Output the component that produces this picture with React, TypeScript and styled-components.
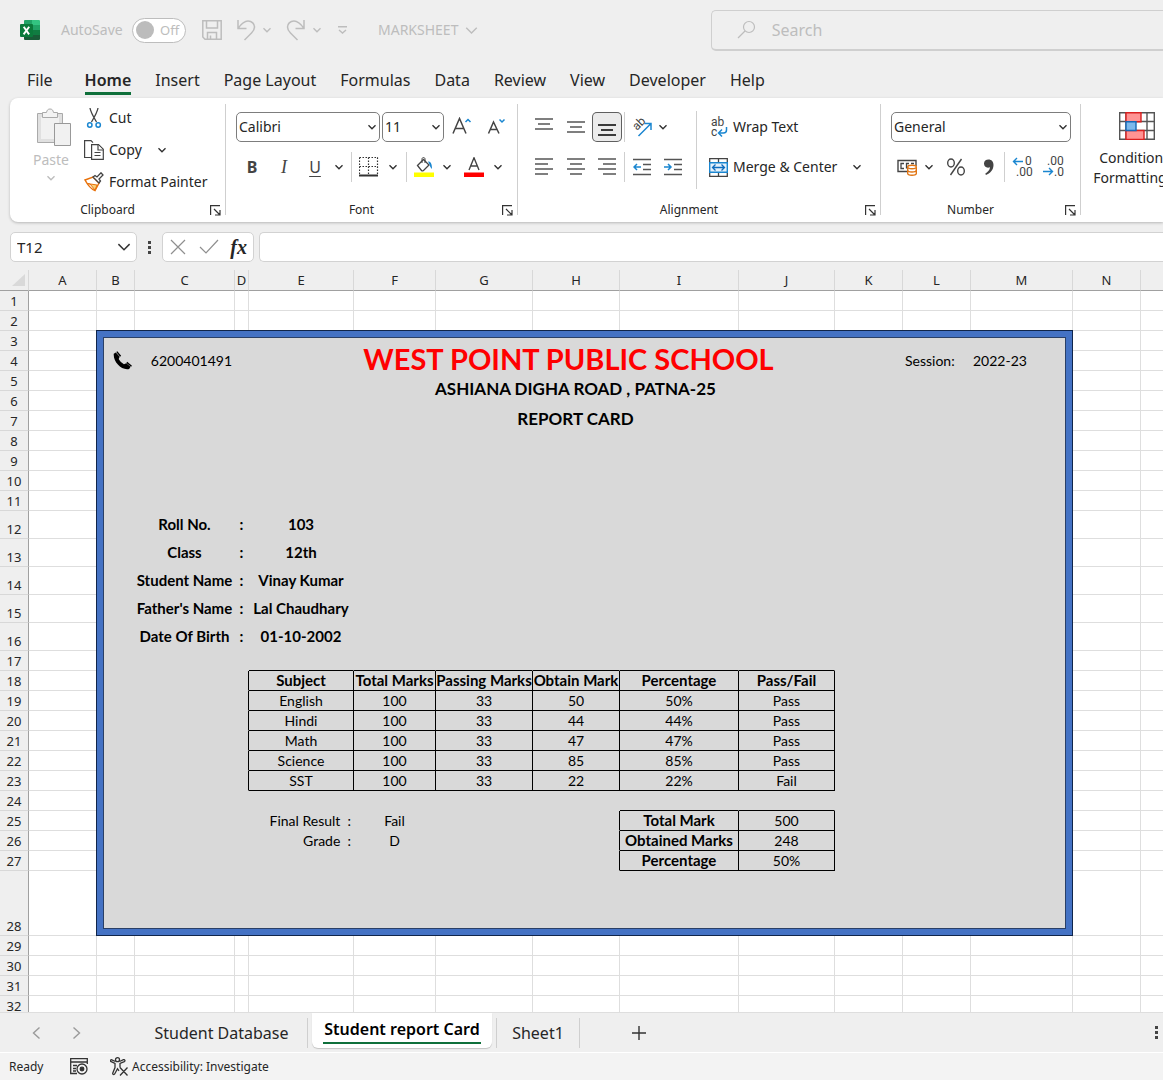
import React from "react";
import styled, { createGlobalStyle } from "styled-components";

const UI = `"Noto Sans", "Open Sans", sans-serif`;
const CELL = `Lato, "Open Sans", sans-serif`;

const ink = "#262626";
const faded = "#bdbdbd";
const rule = "#dedede";
const green = "#0f703b";
const blue = "#1a86d0";

const Global = createGlobalStyle`
  * { box-sizing: border-box; }
  body { margin: 0; background: #efefef; overflow: hidden; }
  button, input, select { font: inherit; color: inherit; }
  button { border: 0; background: none; padding: 0; cursor: pointer; }
  svg { display: block; flex: none; }
`;

const Window = styled.div`
  display: flex;
  flex-direction: column;
  height: 100vh;
  overflow: hidden;
  background: #efefef;
  color: ${ink};
  font: 14px/20px ${UI};
`;

/* ---------- title bar ---------- */

const TitleBar = styled.header`
  display: grid;
  grid-template-columns: 11fr 7fr;
  align-items: center;
  height: 60px;
  color: ${faded};
  flex: none;
`;
const QuickAccess = styled.div`
  display: flex;
  align-items: center;
  gap: 14px;
  padding-left: 20px;
`;
const AutoSave = styled.label`
  display: flex;
  align-items: center;
  justify-content: space-between;
  width: 125px;
  margin: 0 2px 0 7px;
`;
const Toggle = styled.span`
  display: flex;
  align-items: center;
  gap: 6px;
  width: 54px;
  height: 25px;
  padding-left: 3px;
  border: 1px solid ${faded};
  border-radius: 13px;
  background: #fff;
  font-size: 13px;
`;
const ToggleBox = styled.input`
  appearance: none;
  width: 18px;
  height: 18px;
  margin: 0;
  border-radius: 50%;
  background: #bcbcbc;
`;
const QuickButton = styled.button`
  display: flex;
  align-items: center;
  gap: 6px;
`;
const FileName = styled(QuickButton)`
  margin-left: 16px;
`;
const Search = styled.label`
  display: flex;
  align-items: center;
  gap: 14px;
  height: 41px;
  padding-left: 25px;
  border: 1px solid #cfcfcf;
  border-right: 0;
  border-bottom-width: 2px;
  border-radius: 5px 0 0 5px;
`;
const SearchInput = styled.input`
  flex: 1;
  min-width: 0;
  border: 0;
  background: none;
  font-size: 16px;
  &::placeholder { color: ${faded}; opacity: 1; }
`;

/* ---------- ribbon tabs ---------- */

const Tabs = styled.nav`
  display: flex;
  gap: 24px;
  height: 38px;
  padding: 8px 0 3px 27px;
  flex: none;
`;
const Tab = styled.button<{ $on?: boolean; $file?: boolean }>`
  font-size: 16px;
  line-height: 24px;
  white-space: nowrap;
  margin-right: ${(p) => (p.$file ? 8 : 0)}px;
  font-weight: ${(p) => (p.$on ? 600 : 400)};
  border-bottom: 3px solid ${(p) => (p.$on ? green : "transparent")};
`;

/* ---------- ribbon ---------- */

const Ribbon = styled.section`
  display: flex;
  flex: none;
  height: 124px;
  margin-left: 10px;
  padding: 6px 0 7px;
  border-radius: 8px 0 0 8px;
  background: #fff;
  box-shadow: 0 1px 3px #0000003d;
  overflow: hidden;
`;
const Group = styled.div<{ $w: number }>`
  display: flex;
  flex-direction: column;
  flex: none;
  width: ${(p) => p.$w}px;
  border-right: 1px solid #cfcfcf;
`;
const GroupBody = styled.div`
  display: flex;
  flex: 1;
`;
const GroupFoot = styled.div`
  display: flex;
  align-items: center;
  height: 16px;
  margin-bottom: -3px;
  font-size: 12px;
`;
const GroupName = styled.span`
  flex: 1;
  text-align: center;
`;
const Launcher = styled.button`
  width: 20px;
  display: grid;
  place-items: center;
`;
const Stack = styled.div<{ $w?: number; $pad?: number }>`
  display: flex;
  flex-direction: column;
  width: ${(p) => (p.$w ? p.$w + "px" : "auto")};
  padding: 3px 0 0 ${(p) => p.$pad ?? 10}px;
`;
const Row = styled.div<{ $gap?: number }>`
  display: flex;
  align-items: center;
  height: 40px;
  gap: ${(p) => p.$gap ?? 0}px;
`;
const Tool = styled.button<{ $w: number; $on?: boolean }>`
  display: grid;
  place-items: center;
  flex: none;
  width: ${(p) => p.$w}px;
  height: 30px;
  border-radius: 5px;
  background: ${(p) => (p.$on ? "#ebebeb" : "none")};
  box-shadow: ${(p) => (p.$on ? "inset 0 0 0 1px #5f5f5f" : "none")};
`;
const Glyph = styled.span<{ $style: "bold" | "italic" | "underline" }>`
  font-size: ${(p) => (p.$style === "italic" ? 18 : 16)}px;
  line-height: 20px;
  color: #444;
  font-weight: ${(p) => (p.$style === "bold" ? 700 : 400)};
  font-style: ${(p) => (p.$style === "italic" ? "italic" : "normal")};
  font-family: ${(p) => (p.$style === "italic" ? `"Liberation Serif", serif` : UI)};
  text-decoration: ${(p) => (p.$style === "underline" ? "underline" : "none")};
  text-underline-offset: 3px;
`;
const Sep = styled.span<{ $m?: number }>`
  flex: none;
  width: 1px;
  height: 30px;
  margin: 0 ${(p) => p.$m ?? 3}px;
  background: #cfcfcf;
`;
const TallSep = styled.span`
  width: 1px;
  height: 78px;
  margin-top: 7px;
  background: #cfcfcf;
`;
const Picker = styled.span<{ $w: number }>`
  display: grid;
  align-items: center;
  flex: none;
  width: ${(p) => p.$w}px;
  height: 30px;
  border: 1px solid #7d7d7d;
  border-radius: 5px;
  background: #fff;
  & > * { grid-area: 1 / 1; }
  & > svg { justify-self: end; margin-right: 2px; pointer-events: none; }
`;
const Select = styled.select`
  appearance: none;
  width: 100%;
  height: 28px;
  padding: 0 16px 0 2px;
  border: 0;
  background: none;
`;
const Paste = styled.button`
  display: flex;
  flex-direction: column;
  align-items: center;
  gap: 4px;
  width: 42px;
  margin: 4px 12px 0 20px;
  color: ${faded};
`;
const Commands = styled.div`
  display: flex;
  flex-direction: column;
  margin-top: -2px;
`;
const Command = styled.button<{ $h?: number }>`
  display: flex;
  align-items: center;
  gap: 5px;
  height: ${(p) => p.$h ?? 32}px;
  white-space: nowrap;
  & > svg:last-child:not(:first-child) { margin-left: 10px; }
`;
const BigCommand = styled.button`
  display: flex;
  flex-direction: column;
  align-items: center;
  flex: none;
  gap: 8px;
  width: 96px;
  margin: 8px 0 0 8px;
  align-self: flex-start;
`;
const WithChevron = styled.span`
  display: flex;
  align-items: center;
  gap: 4px;
`;

/* ---------- formula bar ---------- */

const FormulaBar = styled.div`
  display: flex;
  align-items: center;
  flex: none;
  height: 30px;
  margin: 10px 0 8px 10px;
`;
const NameBox = styled.div`
  display: flex;
  align-items: center;
  width: 127px;
  height: 30px;
  padding: 0 4px 0 6px;
  border: 1px solid #d2d2d2;
  border-radius: 5px;
  background: #fff;
`;
const NameInput = styled.input`
  flex: 1;
  min-width: 0;
  border: 0;
  padding: 0;
  font-size: 15px;
`;
const Dots = styled.button<{ $w: number; $end?: boolean }>`
  display: grid;
  place-items: center;
  width: ${(p) => p.$w}px;
  margin-left: ${(p) => (p.$end ? "auto" : 0)};
`;
const FormulaButtons = styled.div`
  display: flex;
  align-items: center;
  justify-content: space-between;
  width: 92px;
  height: 30px;
  padding: 0 6px;
  margin-right: 5px;
  border: 1px solid #d2d2d2;
  border-radius: 5px;
  background: #fff;
`;
const Fx = styled.button`
  font: italic 700 20px/24px "Liberation Serif", serif;
`;
const FormulaInput = styled.input`
  flex: 1;
  height: 30px;
  border: 1px solid #d2d2d2;
  border-right: 0;
  border-radius: 5px 0 0 5px;
  background: #fff;
`;

/* ---------- sheet ---------- */

const Sheet = styled.main`
  position: relative;
  flex: 1;
  min-height: 0;
  overflow: hidden;
  background: #fff;
`;
const Grid = styled.table`
  table-layout: fixed;
  border-collapse: separate;
  border-spacing: 0;
  background: #fff;
`;
const ColHead = styled.th`
  height: 21px;
  padding: 0;
  background: #efefef;
  border-right: 1px solid #d8d8d8;
  border-bottom: 1px solid #a0a0a0;
  font: 13px/19px ${UI};
`;
const Corner = styled(ColHead)`
  & > svg { margin: 0 0 0 12px; }
`;
const RowHead = styled.th`
  padding: 0;
  background: #efefef;
  border-right: 1px solid #a0a0a0;
  border-bottom: 1px solid #d8d8d8;
  font: 13px/17px ${UI};
  vertical-align: bottom;
`;
const Cell = styled.td<{ $fill?: boolean; $r?: boolean; $b?: boolean; $bold?: boolean; $align?: string }>`
  padding: ${(p) => (p.$align ? "0 2px" : "0")};
  overflow: hidden;
  white-space: pre;
  color: #000;
  font: ${(p) => (p.$bold ? "700 15px" : "400 14px")}/19px ${CELL};
  text-align: ${(p) => p.$align ?? "center"};
  vertical-align: middle;
  background: ${(p) => (p.$fill ? "#d9d9d9" : "#fff")};
  border-right: 1px solid ${(p) => (p.$r ? "#000" : p.$fill ? "#d9d9d9" : rule)};
  border-bottom: 1px solid ${(p) => (p.$b ? "#000" : p.$fill ? "#d9d9d9" : rule)};
  & > svg { margin-left: auto; }
`;
const Heading = styled(Cell)`
  vertical-align: top;
  padding-top: 13px;
`;
const School = styled.h1`
  margin: 0;
  color: #f00;
  font-size: 29px;
  line-height: 30px;
`;
const SubHead = styled.h2`
  margin: 0;
  padding-left: 14px;
  font-size: 17px;
  line-height: 30px;
`;
const Frame = styled.div`
  position: absolute;
  border: 6px solid #4472c4;
  box-shadow: 0 0 0 1px #10254a, inset 0 0 0 1px #2a4067;
  pointer-events: none;
`;

/* ---------- bottom bars ---------- */

const SheetTabs = styled.nav`
  display: flex;
  align-items: center;
  flex: none;
  height: 41px;
  border-top: 1px solid ${rule};
  border-bottom: 1px solid #fff;
  font-size: 16px;
`;
const Navs = styled.div`
  display: flex;
  width: 136px;
  padding-left: 16px;
`;
const Nav = styled.button<{ $w?: number }>`
  display: grid;
  place-items: center;
  width: ${(p) => p.$w ?? 40}px;
`;
const SheetTab = styled.button<{ $w: number }>`
  width: ${(p) => p.$w}px;
  white-space: nowrap;
`;
const ActiveTab = styled.button`
  display: flex;
  justify-content: center;
  align-items: flex-start;
  align-self: flex-start;
  width: 180px;
  height: 35px;
  margin: 0 4px;
  padding-top: 4px;
  border-radius: 0 0 6px 6px;
  background: #fff;
  color: #000;
  font-weight: 600;
  white-space: nowrap;
  box-shadow: 0 1px 1px #0000002e;
`;
const ActiveText = styled.span`
  line-height: 24px;
  padding: 0 1px 1px;
  border-bottom: 2px solid ${green};
`;
const StatusBar = styled.footer`
  display: flex;
  align-items: center;
  flex: none;
  height: 27px;
  padding-left: 9px;
  background: #f3f3f3;
  font-size: 12px;
`;
const StatusButton = styled.button`
  display: flex;
  align-items: center;
  gap: 4px;
  margin-left: 22px;
`;
const Ready = styled.span`
  width: 39px;
`;

/* ---------- icons ---------- */

const Chevron = ({ c = "#333", s = 8 }: { c?: string; s?: number }) => (
  <svg width={s + 2} height={s} viewBox="0 0 10 8" fill="none" stroke={c} strokeWidth={s > 8 ? 0.9 : 1.4}>
    <path d="M1.5 2.2 5 5.7l3.5-3.5" />
  </svg>
);
const Excel = () => (
  <svg width="20" height="20" viewBox="0 0 20 20">
    <path d="M5 0h7v5H4V1a1 1 0 0 1 1-1z" fill="#21a366" />
    <path d="M12 0h7a1 1 0 0 1 1 1v4h-8z" fill="#33c481" />
    <path d="M4 5h8v5H4z" fill="#107c41" />
    <path d="M12 5h8v5h-8z" fill="#21a366" />
    <path d="M4 10h8v5H4z" fill="#185c37" />
    <path d="M12 10h8v5h-8z" fill="#107c41" />
    <path d="M4 15h16v4a1 1 0 0 1-1 1H5a1 1 0 0 1-1-1z" fill="#185c37" />
    <rect y="4" width="13" height="13" rx="1" fill="#0b7a3b" />
    <path d="m3.7 6.800 5.400 7.600M9.200 6.800l-5.600 7.600" stroke="#fff" strokeWidth="1.900" />
  </svg>
);
const Save = () => (
  <svg width="20" height="20" viewBox="0 0 20 20" fill="none" stroke={faded} strokeWidth="1.5">
    <path d="M.8.8h18.4v18.4H3L.8 17zM4.5 1v7h11V1M5.500 19v-6.500h9V19M8.500 15.500V19" />
  </svg>
);
const Undo = ({ flip }: { flip?: boolean }) => (
  <svg width="20" height="22" viewBox="0 0 20 22" fill="none" stroke={faded} strokeWidth="1.5">
    <g transform={flip ? "matrix(-1 0 0 1 20 0)" : undefined}>
      <path d="M2 1v8.500h8.500M2.200 9.200C5.500 4.500 8.500 2 12 2c4 0 6.500 3 6.500 6 0 2.500-1 4-3 6L8.500 21" />
    </g>
  </svg>
);
const Customize = () => (
  <svg width="12" height="10" viewBox="0 0 12 10" fill="none" stroke={faded} strokeWidth="1.400">
    <path d="M2 1.700h9M3 5l3.500 3L10 5" />
  </svg>
);
const Magnifier = () => (
  <svg width="19" height="19" viewBox="0 0 19 19" fill="none" stroke={faded} strokeWidth="1.200">
    <circle cx="12" cy="7" r="5.500" />
    <path d="m8 11-7 7" />
  </svg>
);
const PasteIcon = () => (
  <svg width="42" height="38" viewBox="-6 0 42 38">
    <path d="M1.500 5.500h25v29h-25z" fill="#e0e0e0" stroke="#aaa" />
    <path d="M5 9h18v22H5z" fill="#f1f1f1" />
    <path d="M6.500 9.500v-5h4C11 2 12 1 14 1s3 1 3.500 3.500h4v5z" fill="#f3f3f3" stroke="#aaa" />
    <path d="M18.500 15.500h16v22h-16z" fill="#f1f1f1" stroke="#999" />
  </svg>
);
const CutIcon = () => (
  <svg width="20" height="20" viewBox="0 0 20 20" fill="none">
    <path d="M6 0c.5 4 3.500 9 6.500 14M14 0c-.5 4-3.500 9-6.500 14" stroke="#444" strokeWidth="1.300" />
    <circle cx="5.800" cy="17" r="2.200" stroke={blue} strokeWidth="1.500" />
    <circle cx="14.200" cy="17" r="2.200" stroke={blue} strokeWidth="1.500" />
  </svg>
);
const CopyIcon = () => (
  <svg width="20" height="20" viewBox="0 0 20 20" fill="#fff" stroke="#444" strokeWidth="1.200">
    <path d="M7 17.500H.600V.600H7l2 2" />
    <path d="M7.600 4.600h6.900l4.800 4.700v10H7.600z" />
    <path d="M14 5v5h5M10.500 12.500h6M10.500 15.500h6" />
  </svg>
);
const Painter = () => (
  <svg width="20" height="20" viewBox="0 0 20 20" fill="none">
    <path d="m1 8 8-3 6 6-4 7.500c-3-1-7-5-10-10.500z" fill="#fff" stroke="#e8720c" strokeWidth="1.500" />
    <path d="m3 11.500 3 .5 5 6 2-5z" fill="#f9d27a" stroke="#e8720c" />
    <path d="m9 5 6 6 1.500-2-1.500-2 4-4-2-2.200L13 5l-2-1.500z" fill="#fff" stroke="#444" strokeWidth="1.300" />
  </svg>
);
const LaunchIcon = () => (
  <svg width="11" height="11" viewBox="0 0 11 11" fill="none" stroke="#333" strokeWidth="1.200">
    <path d="M.600 10V.600H10M4 4l5.500 5.500M10 5v5H5" />
  </svg>
);
const Sizer = ({ up }: { up?: boolean }) => (
  <svg width="22" height="20" viewBox="0 0 22 20" fill="none" strokeWidth="1.500">
    <path d={up ? "M2 16.500 8.500 1.500 15 16.500M4.200 11.500h8.600" : "M3.500 16.500 8.500 5 14 16.500M5.200 12.500h7"} stroke="#444" />
    <path d={up ? "m14.500 5 2.500-2.500L19.500 5" : "M14.500 2.500 17 5l2.500-2.500"} stroke={blue} />
  </svg>
);
const BordersIcon = () => (
  <svg width="20" height="20" viewBox="0 0 20 20" fill="none" stroke="#333">
    <path d="M.500.500h18.500M.500 9.500h18.500M.500.500v17M9.500.500v17M18.500.500v17" strokeDasharray="1.500 1.500" strokeWidth="1.200" />
    <path d="M0 18.500h19" strokeWidth="2" />
  </svg>
);
const FillIcon = () => (
  <svg width="20" height="20" viewBox="0 0 20 20" fill="none">
    <path d="M0 15.500h20V20H0z" fill="#ff0" />
    <path d="m3.500 8.500 6-6 5.500 5.500-5.500 5.500c-1 .7-1.500.5-2 0z" stroke="#444" strokeWidth="1.300" />
    <path d="M8 6V2c0-2 3-2 3 0v4" stroke="#444" />
    <path d="M14 4.500c3 0 4 2.500 4 7.500-1.500-1-2-3-2.500-4.500z" fill={blue} />
  </svg>
);
const FontColorIcon = () => (
  <svg width="20" height="20" viewBox="0 0 20 20" fill="none">
    <path d="M0 15.500h20V20H0z" fill="#f00" />
    <path d="M5 13 10 .800 15 13M6.700 9h6.600" stroke="#444" strokeWidth="1.400" />
  </svg>
);
const Lines = ({ rows, c = "#555" }: { rows: [number, number, number][]; c?: string }) => (
  <svg width="18" height="18" viewBox="0 0 18 18" stroke={c} strokeWidth="1.400">
    {rows.map(([x1, x2, y], i) => (
      <path key={i} d={`M${x1} ${y}H${x2}`} />
    ))}
  </svg>
);
const IndentIcon = ({ right }: { right?: boolean }) => (
  <svg width="18" height="18" viewBox="0 0 18 18" fill="none" strokeWidth="1.500">
    <path d="M0 1.500h18M10 6.500h8M10 11.500h8M0 16.500h18" stroke="#555" />
    <path d={right ? "M0 9h7M4 6l3 3-3 3" : "M8 9H1M4 6 1 9l3 3"} stroke={blue} />
  </svg>
);
const Tiny = styled.text`
  font-family: Roboto, sans-serif;
  font-size: 12px;
  fill: #444;
`;
const OrientIcon = () => (
  <svg width="24" height="24" viewBox="0 0 24 24" fill="none">
    <Tiny transform="translate(7 16) rotate(-45)">ab</Tiny>
    <path d="m8.500 21 12-12M14.500 8.500H21V15" stroke={blue} strokeWidth="1.500" />
  </svg>
);
const WrapIcon = () => (
  <svg width="19" height="26" viewBox="0 0 19 26" fill="none">
    <Tiny x="2" y="12">ab</Tiny>
    <Tiny x="2" y="22">c</Tiny>
    <path d="M17.500 13v3c0 2-1 3-3 3H10M13 15.500 9.500 19l3.500 3.500" stroke={blue} strokeWidth="1.500" />
  </svg>
);
const MergeIcon = () => (
  <svg width="19" height="19" viewBox="0 0 19 19" fill="none">
    <path d="M.700.700h17.600v17.600H.700zM9.500 1v4M9.500 14v4" stroke="#444" strokeWidth="1.300" />
    <path d="M.700 4.700h17.600v9.600H.700z" fill="#e5f1fb" stroke={blue} strokeWidth="1.400" />
    <path d="M3.500 9.500h12M6.500 6.500l-3 3 3 3M12.500 6.500l3 3-3 3" stroke="#0f6cbd" strokeWidth="1.300" />
  </svg>
);
const MoneyIcon = () => (
  <svg width="20" height="18" viewBox="0 0 20 18" fill="none">
    <path d="M19 8V2.500H1v11h9" stroke="#444" strokeWidth="1.400" />
    <path d="M7 5.500H4v5h3M12 5.500H9.500v5M14 5.500h3" stroke="#444" strokeWidth="1.300" />
    <path d="M10.700 9v6.500c0 2.300 8.600 2.300 8.600 0V9" fill="#fff" stroke="#e07514" strokeWidth="1.400" />
    <ellipse cx="15" cy="9" rx="4.300" ry="1.700" fill="#fff" stroke="#e07514" strokeWidth="1.400" />
    <path d="M10.700 12.300c0 2.300 8.600 2.300 8.600 0" stroke="#e07514" strokeWidth="1.400" />
  </svg>
);
const PercentIcon = () => (
  <svg width="20" height="18" viewBox="0 0 20 18" fill="none" stroke="#444" strokeWidth="1.400">
    <ellipse cx="5" cy="5" rx="3.300" ry="4" />
    <ellipse cx="15" cy="13" rx="3.300" ry="4" />
    <path d="M15.500 1 4.500 17" />
  </svg>
);
const CommaIcon = () => (
  <svg width="12" height="18" viewBox="0 0 12 18" fill="#444">
    <path d="M1 5.500C1 3 3 1.500 5.500 1.500c3 0 5 2.200 5 5.500 0 5-3.500 8.500-7.500 10l-.8-1.300C5 14 6.800 12 7 9.300 3.500 10.500 1 8.500 1 5.500z" />
  </svg>
);
const DecimalIcon = ({ less }: { less?: boolean }) => (
  <svg width="22" height="28" viewBox="0 0 22 28" fill="none">
    <Tiny x={less ? 4 : 13} y="12">{less ? ".00" : "0"}</Tiny>
    <Tiny x={less ? 11 : 4} y="23">{less ? ".0" : ".00"}</Tiny>
    <path d={less ? "M0 18.500h9M6 15l3.500 3.500L6 22" : "M11 8.500H1.500M5 5 1.500 8.500 5 12"} stroke={blue} strokeWidth="1.400" />
  </svg>
);
const ConditionalIcon = () => (
  <svg width="36" height="28" viewBox="0 0 36 28" fill="#fff" stroke="#555" strokeWidth="1.400">
    <path d="M.700.700h34.600v26.600H.700zM.700 9.500h34.600M.700 18.500h34.600M7 1v26M28 1v26" />
    <path d="M7 .700h15v9H7zM7 18.500h18v9H7z" fill="#ff9393" stroke="#d92020" />
    <path d="M7 9.700h10v8.800H7z" fill="#7db9ec" stroke="#1667b5" />
  </svg>
);
const DotsIcon = () => (
  <svg width="3" height="13" viewBox="0 0 3 13" fill="#444">
    <path d="M0 0h3v3H0zM0 5h3v3H0zM0 10h3v3H0z" />
  </svg>
);
const CrossIcon = () => (
  <svg width="18" height="18" viewBox="0 0 18 18" stroke="#8f8f8f" strokeWidth="1.200">
    <path d="m2 2 14 14M16 2 2 16" />
  </svg>
);
const TickIcon = () => (
  <svg width="20" height="18" viewBox="0 0 20 18" fill="none" stroke="#8f8f8f" strokeWidth="1.200">
    <path d="m1 9 6 6L19 2" />
  </svg>
);
const PhoneIcon = () => (
  <svg width="19" height="19" viewBox="0 0 20 20">
    <path d="M.800 3 3 1.500l4 4.500-1 2.500c1.300 2.300 3 4 5.500 5.500l2.500-1 4.500 3.500-1.500 2.500C9 21 0 11.500.800 3z" fill="#000" />
    <path d="m4 .700 4 4.800M14.500 12l5 4" stroke="#000" strokeWidth="1.500" />
  </svg>
);
const NavIcon = ({ next }: { next?: boolean }) => (
  <svg width="9" height="14" viewBox="0 0 9 14" fill="none" stroke="#9a9a9a" strokeWidth="1.400">
    <path d={next ? "m1.500 1.500 6 5.500-6 5.500" : "m7.500 1.500-6 5.500 6 5.500"} />
  </svg>
);
const PlusIcon = () => (
  <svg width="16" height="16" viewBox="0 0 16 16" stroke="#333" strokeWidth="1.400">
    <path d="M8 1v14M1 8h14" />
  </svg>
);
const MacroIcon = () => (
  <svg width="18" height="17" viewBox="0 0 18 17" fill="none" stroke="#333" strokeWidth="1.300">
    <path d="M7 15.500H.700V.700h16.600V6M1 4h16M3 7.500h4M3 10.500h3M3 13h3" />
    <circle cx="12" cy="11" r="5" fill="#f3f3f3" />
    <circle cx="12" cy="11" r="1.800" fill="#333" />
  </svg>
);
const AccessIcon = () => (
  <svg width="18" height="19" viewBox="0 0 18 19" fill="none" stroke="#333" strokeWidth="1.300">
    <circle cx="7.500" cy="2.700" r="2" />
    <path d="M5.500 4.500 1.800 2.800C.500 2.300 0 4 1.200 4.700L5 6.500v4L2.800 16c-.5 1.500 1.300 2.200 2 .8l2.700-5 1.500 2M9.500 4.500l4-1.800c1.300-.5 2 1.200.8 1.900L10 6.500v4M10 10.500l7.500 8M17.500 10.500l-7.500 8" />
  </svg>
);

/* ---------- sheet data ---------- */

const HEAD_W = 29;
const HEAD_H = 21;
const columns: [string, number][] = [
  ["A", 68], ["B", 38], ["C", 100], ["D", 14], ["E", 105], ["F", 82], ["G", 97], ["H", 87],
  ["I", 119], ["J", 96], ["K", 68], ["L", 68], ["M", 102], ["N", 68], ["O", 68],
];
const tableWidth = columns.reduce((s, c) => s + c[1], HEAD_W);
const rowHeight = (r: number) => (r >= 12 && r <= 16 ? 28 : r === 28 ? 65 : 20);
const rows = Array.from({ length: 32 }, (_, i) => i + 1);

type Entry = { text: React.ReactNode; bold?: boolean; align?: string };
const cells: Record<string, Entry> = {
  B4: { text: <PhoneIcon />, align: "right" },
  C4: { text: "6200401491", align: "right" },
  L4: { text: "Session:", align: "left" },
  M4: { text: "2022-23", align: "left" },
  E25: { text: "Final Result  :", align: "right" },
  F25: { text: "Fail" },
  E26: { text: "Grade  :", align: "right" },
  F26: { text: "D" },
};
[
  ["Roll No.", "103"],
  ["Class", "12th"],
  ["Student Name", "Vinay Kumar"],
  ["Father's Name", "Lal Chaudhary"],
  ["Date Of Birth", "01-10-2002"],
].forEach(([label, value], i) => {
  cells[`C${12 + i}`] = { text: label, bold: true };
  cells[`D${12 + i}`] = { text: ":", bold: true };
  cells[`E${12 + i}`] = { text: value, bold: true };
});
[
  ["Subject", "Total Marks", "Passing Marks", "Obtain Mark", "Percentage", "Pass/Fail"],
  ["English", "100", "33", "50", "50%", "Pass"],
  ["Hindi", "100", "33", "44", "44%", "Pass"],
  ["Math", "100", "33", "47", "47%", "Pass"],
  ["Science", "100", "33", "85", "85%", "Pass"],
  ["SST", "100", "33", "22", "22%", "Fail"],
].forEach((line, i) =>
  line.forEach((text, j) => {
    cells[`${"EFGHIJ"[j]}${18 + i}`] = { text, bold: i === 0 };
  })
);
[["Total Mark", "500"], ["Obtained Marks", "248"], ["Percentage", "50%"]].forEach(([k, v], i) => {
  cells[`I${25 + i}`] = { text: k, bold: true };
  cells[`J${25 + i}`] = { text: v };
});

// Boxed ranges: a cell draws its right and bottom edges, its neighbours supply the others.
const boxes = [
  { c0: 4, c1: 9, r0: 18, r1: 23 },
  { c0: 8, c1: 9, r0: 25, r1: 27 },
];
const card = { c0: 1, c1: 12, r0: 3, r1: 28 };
const heading = { c0: 3, c1: 10, r0: 3, r1: 8 };
const sumCols = (a: number, b: number) => columns.slice(a, b).reduce((s, c) => s + c[1], 0);
const sumRows = (a: number, b: number) => rows.slice(a, b).reduce((s, r) => s + rowHeight(r), 0);

const SheetCell = ({ c, r }: { c: number; r: number }) => {
  const h = heading;
  if (c === h.c0 && r === h.r0) {
    return (
      <Heading $fill $bold colSpan={h.c1 - h.c0 + 1} rowSpan={h.r1 - h.r0 + 1}>
        <School>WEST POINT PUBLIC SCHOOL</School>
        <SubHead>ASHIANA DIGHA ROAD , PATNA-25</SubHead>
        <SubHead>REPORT CARD</SubHead>
      </Heading>
    );
  }
  if (c >= h.c0 && c <= h.c1 && r >= h.r0 && r <= h.r1) return null;
  const fill = c >= card.c0 && c <= card.c1 && r >= card.r0 && r <= card.r1;
  const right = boxes.some((b) => r >= b.r0 && r <= b.r1 && c >= b.c0 - 1 && c <= b.c1);
  const bottom = boxes.some((b) => r >= b.r0 - 1 && r <= b.r1 && c >= b.c0 && c <= b.c1);
  const entry = cells[columns[c][0] + r];
  return (
    <Cell $fill={fill} $r={right} $b={bottom} $bold={entry?.bold} $align={entry?.align}>
      {entry?.text}
    </Cell>
  );
};

const Foot = ({ name }: { name: string }) => (
  <GroupFoot>
    <GroupName>{name}</GroupName>
    <Launcher aria-label={`${name} settings`}><LaunchIcon /></Launcher>
  </GroupFoot>
);

const ribbonTabs = ["File", "Home", "Insert", "Page Layout", "Formulas", "Data", "Review", "View", "Developer", "Help"];

export default function App() {
  return (
    <Window>
      <Global />
      <TitleBar>
        <QuickAccess>
          <Excel />
          <AutoSave>
            AutoSave
            <Toggle><ToggleBox type="checkbox" />Off</Toggle>
          </AutoSave>
          <QuickButton aria-label="Save"><Save /></QuickButton>
          <QuickButton aria-label="Undo"><Undo /><Chevron c={faded} /></QuickButton>
          <QuickButton aria-label="Redo"><Undo flip /><Chevron c={faded} /></QuickButton>
          <QuickButton aria-label="Customize toolbar"><Customize /></QuickButton>
          <FileName>MARKSHEET<Chevron c={faded} s={13} /></FileName>
        </QuickAccess>
        <Search>
          <Magnifier />
          <SearchInput type="search" placeholder="Search" aria-label="Search" />
        </Search>
      </TitleBar>

      <Tabs>
        {ribbonTabs.map((t) => (
          <Tab key={t} $on={t === "Home"} $file={t === "File"}>{t}</Tab>
        ))}
      </Tabs>

      <Ribbon>
        <Group $w={216}>
          <GroupBody>
            <Paste><PasteIcon />Paste<Chevron c={faded} /></Paste>
            <Commands>
              <Command><CutIcon />Cut</Command>
              <Command><CopyIcon />Copy<Chevron /></Command>
              <Command><Painter />Format Painter</Command>
            </Commands>
          </GroupBody>
          <Foot name="Clipboard" />
        </Group>

        <Group $w={292}>
          <GroupBody>
            <Stack>
              <Row $gap={2}>
                <Picker $w={144}>
                  <Select aria-label="Font"><option>Calibri</option></Select>
                  <Chevron />
                </Picker>
                <Picker $w={62}>
                  <Select aria-label="Font size"><option>11</option></Select>
                  <Chevron />
                </Picker>
                <Tool $w={32} aria-label="Increase font size"><Sizer up /></Tool>
                <Tool $w={32} aria-label="Decrease font size"><Sizer /></Tool>
              </Row>
              <Row>
                <Tool $w={32}><Glyph $style="bold">B</Glyph></Tool>
                <Tool $w={32}><Glyph $style="italic">I</Glyph></Tool>
                <Tool $w={30}><Glyph $style="underline">U</Glyph></Tool>
                <Tool $w={18} aria-label="Underline styles"><Chevron /></Tool>
                <Sep />
                <Tool $w={28} aria-label="Borders"><BordersIcon /></Tool>
                <Tool $w={20} aria-label="Border styles"><Chevron /></Tool>
                <Sep />
                <Tool $w={28} aria-label="Fill colour"><FillIcon /></Tool>
                <Tool $w={18} aria-label="Fill colours"><Chevron /></Tool>
                <Tool $w={36} aria-label="Font colour"><FontColorIcon /></Tool>
                <Tool $w={12} aria-label="Font colours"><Chevron /></Tool>
              </Row>
            </Stack>
          </GroupBody>
          <Foot name="Font" />
        </Group>

        <Group $w={363}>
          <GroupBody>
            <Stack $w={178}>
              <Row>
                <Tool $w={32} aria-label="Top align"><Lines rows={[[0, 18, 1], [3, 15, 6], [0, 18, 11]]} /></Tool>
                <Tool $w={32} aria-label="Middle align"><Lines rows={[[0, 18, 4], [3, 15, 9], [0, 18, 14]]} /></Tool>
                <Tool $w={30} $on aria-label="Bottom align"><Lines c="#000" rows={[[0, 18, 7], [3, 15, 12], [0, 18, 17]]} /></Tool>
                <Sep $m={2} />
                <Tool $w={30} aria-label="Orientation"><OrientIcon /></Tool>
                <Tool $w={12} aria-label="Orientation options"><Chevron /></Tool>
              </Row>
              <Row>
                <Tool $w={32} aria-label="Align left"><Lines rows={[[0, 18, 1], [0, 13, 6], [0, 18, 11], [0, 13, 16]]} /></Tool>
                <Tool $w={32} aria-label="Center"><Lines rows={[[0, 18, 1], [3, 15, 6], [0, 18, 11], [3, 15, 16]]} /></Tool>
                <Tool $w={30} aria-label="Align right"><Lines rows={[[0, 18, 1], [5, 18, 6], [0, 18, 11], [5, 18, 16]]} /></Tool>
                <Sep $m={2} />
                <Tool $w={30} aria-label="Decrease indent"><IndentIcon /></Tool>
                <Tool $w={32} aria-label="Increase indent"><IndentIcon right /></Tool>
              </Row>
            </Stack>
            <TallSep />
            <Stack $pad={12}>
              <Command $h={40}><WrapIcon />Wrap Text</Command>
              <Command $h={40}><MergeIcon />Merge &amp; Center<Chevron /></Command>
            </Stack>
          </GroupBody>
          <Foot name="Alignment" />
        </Group>

        <Group $w={200}>
          <GroupBody>
            <Stack>
              <Row>
                <Picker $w={180}>
                  <Select aria-label="Number format"><option>General</option></Select>
                  <Chevron />
                </Picker>
              </Row>
              <Row>
                <Tool $w={32} aria-label="Accounting format"><MoneyIcon /></Tool>
                <Tool $w={12} aria-label="Currencies"><Chevron /></Tool>
                <Tool $w={42} aria-label="Percent style"><PercentIcon /></Tool>
                <Tool $w={24} aria-label="Comma style"><CommaIcon /></Tool>
                <Sep />
                <Tool $w={30} aria-label="Increase decimal"><DecimalIcon /></Tool>
                <Tool $w={32} aria-label="Decrease decimal"><DecimalIcon less /></Tool>
              </Row>
            </Stack>
          </GroupBody>
          <Foot name="Number" />
        </Group>

        <BigCommand>
          <ConditionalIcon />
          <span>
            Conditional
            <WithChevron>Formatting<Chevron /></WithChevron>
          </span>
        </BigCommand>
      </Ribbon>

      <FormulaBar>
        <NameBox>
          <NameInput aria-label="Name box" defaultValue="T12" />
          <button aria-label="Names"><Chevron s={14} /></button>
        </NameBox>
        <Dots $w={25} aria-label="Resize"><DotsIcon /></Dots>
        <FormulaButtons>
          <button aria-label="Cancel"><CrossIcon /></button>
          <button aria-label="Enter"><TickIcon /></button>
          <Fx>fx</Fx>
        </FormulaButtons>
        <FormulaInput aria-label="Formula" />
      </FormulaBar>

      <Sheet>
        <Grid style={{ width: tableWidth }}>
          <colgroup>
            <col style={{ width: HEAD_W }} />
            {columns.map(([name, w]) => <col key={name} style={{ width: w }} />)}
          </colgroup>
          <thead>
            <tr>
              <Corner aria-label="Select all">
                <svg width="13" height="12" viewBox="0 0 13 12"><path d="M13 0v12H0z" fill="#d9d9d9" /></svg>
              </Corner>
              {columns.map(([name]) => <ColHead key={name} scope="col">{name}</ColHead>)}
            </tr>
          </thead>
          <tbody>
            {rows.map((r) => (
              <tr key={r} style={{ height: rowHeight(r) }}>
                <RowHead scope="row">{r}</RowHead>
                {columns.map((_, c) => <SheetCell key={c} c={c} r={r} />)}
              </tr>
            ))}
          </tbody>
        </Grid>
        <Frame
          style={{
            left: HEAD_W + sumCols(0, card.c0),
            top: HEAD_H + sumRows(0, card.r0 - 1),
            width: sumCols(card.c0, card.c1 + 1) - 1,
            height: sumRows(card.r0 - 1, card.r1) - 1,
          }}
        />
      </Sheet>

      <SheetTabs>
        <Navs>
          <Nav aria-label="Previous sheet"><NavIcon /></Nav>
          <Nav aria-label="Next sheet"><NavIcon next /></Nav>
        </Navs>
        <SheetTab $w={171}>Student Database</SheetTab>
        <Sep $m={0} />
        <ActiveTab><ActiveText>Student report Card</ActiveText></ActiveTab>
        <Sep $m={0} />
        <SheetTab $w={82}>Sheet1</SheetTab>
        <Sep $m={0} />
        <Nav $w={118} aria-label="New sheet"><PlusIcon /></Nav>
        <Dots $w={14} $end aria-label="Resize tabs"><DotsIcon /></Dots>
      </SheetTabs>

      <StatusBar>
        <Ready>Ready</Ready>
        <StatusButton aria-label="Record macro"><MacroIcon /></StatusButton>
        <StatusButton><AccessIcon />Accessibility: Investigate</StatusButton>
      </StatusBar>
    </Window>
  );
}
